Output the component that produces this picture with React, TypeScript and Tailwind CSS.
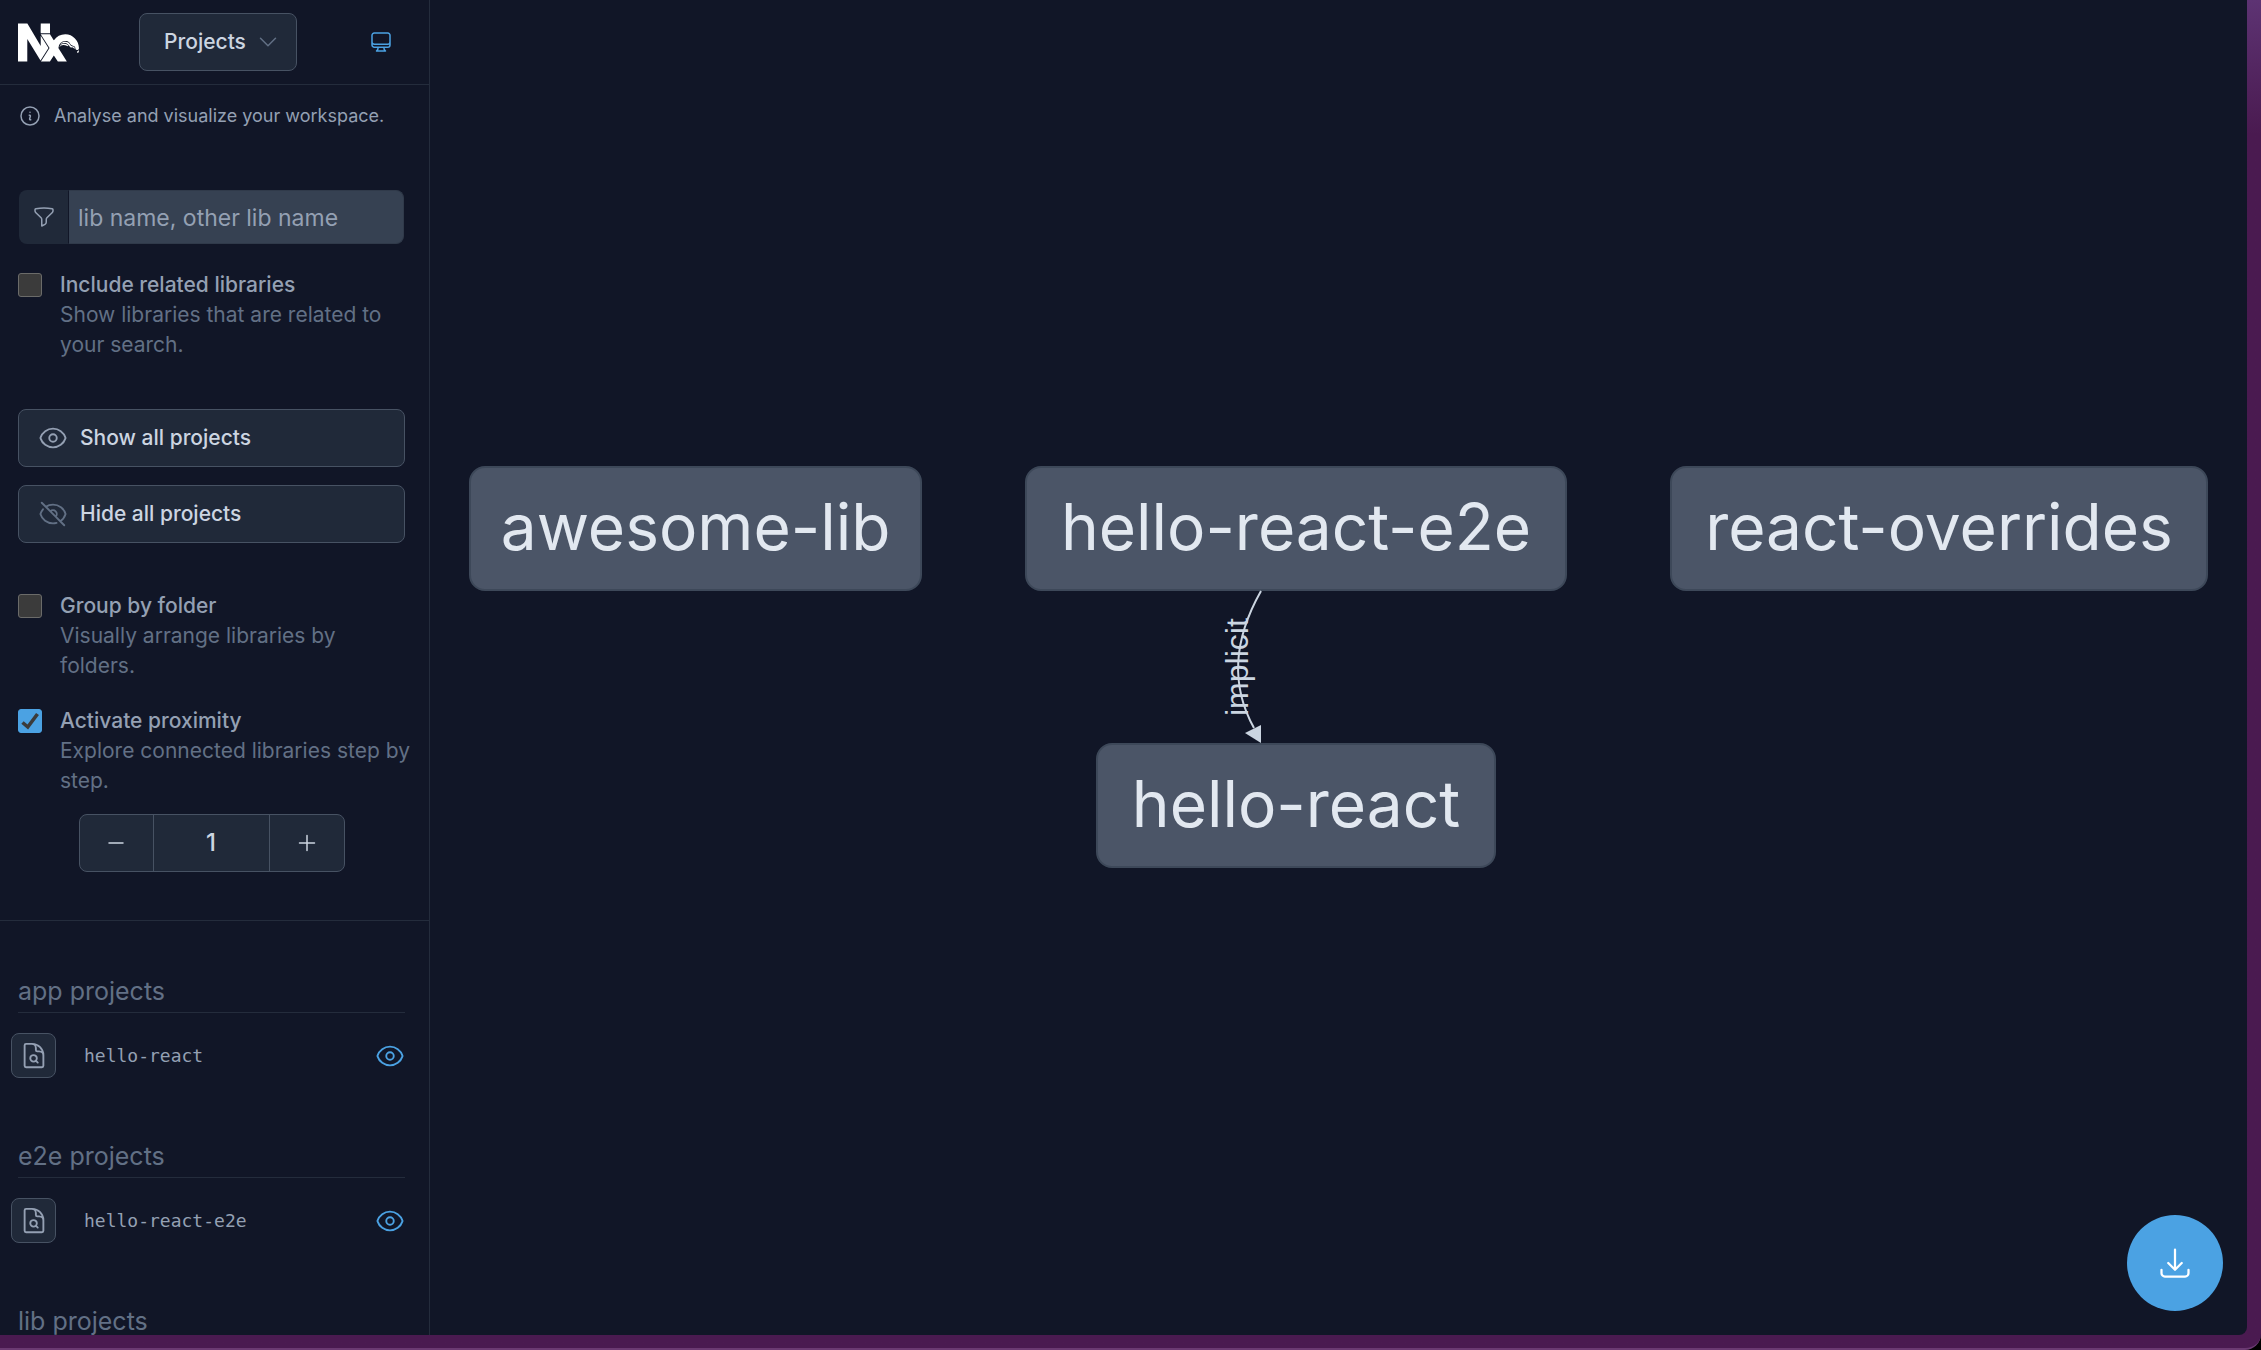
import React, { useState } from 'react';
import {
  HiOutlineArrowDownTray,
  HiOutlineChevronDown,
  HiOutlineComputerDesktop,
  HiOutlineDocumentMagnifyingGlass,
  HiOutlineEye,
  HiOutlineEyeSlash,
  HiOutlineFunnel,
  HiOutlineInformationCircle,
  HiOutlineMinus,
  HiOutlinePlus,
} from 'react-icons/hi2';
import { SiNx } from 'react-icons/si';

const projectGroups = [
  { title: 'app projects', projects: ['hello-react'] },
  { title: 'e2e projects', projects: ['hello-react-e2e'] },
  { title: 'lib projects', projects: ['awesome-lib', 'react-overrides'] },
];

function CheckboxPanel({
  id,
  label,
  description,
  checked,
  onChange,
}: {
  id: string;
  label: string;
  description: string;
  checked: boolean;
  onChange: (checked: boolean) => void;
}) {
  return (
    <div className="-mr-2 flex items-start gap-[18px]">
      <div className="relative mt-[3px] size-6 shrink-0">
        <input
          id={id}
          type="checkbox"
          checked={checked}
          onChange={(e) => onChange(e.target.checked)}
          className="block size-6 appearance-none rounded-[3px] border border-[#6b6b69] bg-[#3b3b3b] checked:border-[#4ba2e3] checked:bg-[#4ba2e3]"
        />
        {checked && (
          <svg viewBox="0 0 24 24" className="pointer-events-none absolute inset-0" fill="none">
            <path d="M4.5 13.5 9.8 18 19.5 5" stroke="#3b3b3b" strokeWidth="3.6" />
          </svg>
        )}
      </div>
      <div className="text-[21px] leading-[30px]">
        <label htmlFor={id} className="block font-medium text-[#94a0b3]">
          {label}
        </label>
        <p className="text-[#627085]">{description}</p>
      </div>
    </div>
  );
}

function PanelButton({
  icon,
  children,
  onClick,
}: {
  icon: React.ReactNode;
  children: React.ReactNode;
  onClick?: () => void;
}) {
  return (
    <button
      type="button"
      onClick={onClick}
      className="flex h-[58px] w-full items-center gap-3 rounded-lg border border-[#475263] bg-[#202939] px-[19px] text-[21px] font-medium text-[#ccd5e1]"
    >
      {icon}
      {children}
    </button>
  );
}

function ProjectList({ title, projects }: { title: string; projects: string[] }) {
  return (
    <section>
      <h2 className="border-b border-[#242c3c] pb-[3px] text-[25px] leading-9 text-[#627085]">
        {title}
      </h2>
      <ul className="-ml-[7px] mt-5 space-y-5">
        {projects.map((project) => (
          <li key={project} className="flex items-center">
            <button
              type="button"
              aria-label={`Focus on ${project}`}
              className="flex size-[45px] items-center justify-center rounded-lg border border-[#475263] bg-[#202939] text-[#94a0b3]"
            >
              <HiOutlineDocumentMagnifyingGlass className="size-[30px]" />
            </button>
            <span className="ml-7 flex-1 font-['DejaVu_Sans_Mono',monospace] text-[18px] text-[#94a0b3]">
              {project}
            </span>
            <button type="button" aria-label={`Toggle ${project}`} className="text-[#4ba2e3]">
              <HiOutlineEye className="size-[30px]" />
            </button>
          </li>
        ))}
      </ul>
    </section>
  );
}

function GraphNode({ className, children }: { className: string; children: React.ReactNode }) {
  return (
    <div
      className={`absolute flex h-[125px] items-center justify-center rounded-2xl border-2 border-[#3d4859] bg-[#4b5567] pb-1 text-[64px] leading-none text-[#e2e8f0] ${className}`}
    >
      {children}
    </div>
  );
}

export default function App() {
  const [search, setSearch] = useState('');
  const [includeRelated, setIncludeRelated] = useState(false);
  const [groupByFolder, setGroupByFolder] = useState(false);
  const [proximity, setProximity] = useState(true);
  const [depth, setDepth] = useState(1);

  return (
    <div className="h-screen overflow-hidden bg-black font-['Inter',sans-serif]">
      <div className="h-full rounded-br-2xl border-b-2 border-[#6b3a72] bg-linear-to-b from-[#5d3373] via-[#4a1a50] via-10% to-[#4a1a50] pr-[14px] pb-[13px]">
        <div className="flex h-full overflow-hidden rounded-br-lg bg-[#111627]">
          <aside className="flex w-[430px] shrink-0 flex-col overflow-hidden border-r border-[#242c3c]">
            <header className="flex h-[85px] shrink-0 items-center justify-between border-b border-[#242c3c] pr-6 pl-[18px]">
              <SiNx className="size-[61px] text-white" title="Nx" />
              <button
                type="button"
                className="flex h-[58px] w-[158px] items-center justify-between rounded-lg border border-[#475263] bg-[#202939] pr-4 pl-6 text-[21px] font-medium text-[#ccd5e1]"
              >
                Projects
                <HiOutlineChevronDown className="size-6 text-[#627085]" />
              </button>
              <button type="button" aria-label="Theme" className="p-3 text-[#4ba2e3]">
                <HiOutlineComputerDesktop className="size-6" />
              </button>
            </header>

            <div className="border-b border-[#242c3c] pr-6 pb-12 pl-[18px]">
              <p className="mt-[17px] flex items-center gap-3 text-[18px] leading-7 text-[#94a0b3]">
                <HiOutlineInformationCircle className="size-6" />
                Analyse and visualize your workspace.
              </p>

              <form className="mx-px mt-15 flex h-[54px]" onSubmit={(e) => e.preventDefault()}>
                <label
                  htmlFor="search"
                  aria-label="Filter"
                  className="flex w-[49px] shrink-0 items-center justify-center rounded-l-lg bg-[#202939] text-[#94a0b3]"
                >
                  <HiOutlineFunnel className="size-6" />
                </label>
                <input
                  id="search"
                  type="text"
                  value={search}
                  onChange={(e) => setSearch(e.target.value)}
                  placeholder="lib name, other lib name"
                  className="min-w-0 flex-1 rounded-r-lg border border-[#303a4a] border-l-[#111627] bg-[#364152] px-[9px] pt-[2px] text-[23px] text-[#ccd5e1] placeholder:text-[#94a0b3]"
                />
              </form>

              <div className="mt-[26px]">
                <CheckboxPanel
                  id="include-related"
                  label="Include related libraries"
                  description="Show libraries that are related to your search."
                  checked={includeRelated}
                  onChange={setIncludeRelated}
                />
              </div>

              <div className="mt-[49px] space-y-[18px]">
                <PanelButton icon={<HiOutlineEye className="size-[30px] text-[#94a0b3]" />}>
                  Show all projects
                </PanelButton>
                <PanelButton icon={<HiOutlineEyeSlash className="size-[30px] text-[#627085]" />}>
                  Hide all projects
                </PanelButton>
              </div>

              <div className="mt-12 space-y-[25px]">
                <CheckboxPanel
                  id="group-by-folder"
                  label="Group by folder"
                  description="Visually arrange libraries by folders."
                  checked={groupByFolder}
                  onChange={setGroupByFolder}
                />
                <CheckboxPanel
                  id="proximity"
                  label="Activate proximity"
                  description="Explore connected libraries step by step."
                  checked={proximity}
                  onChange={setProximity}
                />
              </div>

              <div className="mx-auto mt-[18px] flex h-[58px] w-[266px] divide-x divide-[#475263] overflow-hidden rounded-lg border border-[#475263] bg-[#202939] text-[#ccd5e1]">
                <button
                  type="button"
                  aria-label="Decrement"
                  onClick={() => setDepth(Math.max(1, depth - 1))}
                  className="flex w-[74px] items-center justify-center"
                >
                  <HiOutlineMinus className="size-6" />
                </button>
                <span className="flex flex-1 items-center justify-center text-[24px] font-medium">
                  {depth}
                </span>
                <button
                  type="button"
                  aria-label="Increment"
                  onClick={() => setDepth(depth + 1)}
                  className="flex w-[74px] items-center justify-center"
                >
                  <HiOutlinePlus className="size-6" />
                </button>
              </div>
            </div>

            <div className="mt-[52px] space-y-15 pr-6 pl-[18px]">
              {projectGroups.map((group) => (
                <ProjectList key={group.title} {...group} />
              ))}
            </div>
          </aside>

          <main className="relative flex-1 overflow-hidden">
            <GraphNode className="top-[466px] left-[39px] w-[453px]">awesome-lib</GraphNode>
            <GraphNode className="top-[466px] left-[595px] w-[542px]">hello-react-e2e</GraphNode>
            <GraphNode className="top-[466px] left-[1240px] w-[538px]">react-overrides</GraphNode>
            <GraphNode className="top-[743px] left-[666px] w-[400px]">hello-react</GraphNode>

            <svg
              viewBox="0 0 80 152"
              className="absolute top-[591px] left-[771px] h-[152px] w-20 overflow-visible"
            >
              <path d="M60 0Q18 74 53 137" fill="none" stroke="#cbd5e1" strokeWidth="2" />
              <path d="M60 152V134L44 142Z" fill="#cbd5e1" />
              <text
                transform="translate(47 125) rotate(-90)"
                fill="#cbd5e1"
                className="font-['Liberation_Sans',sans-serif] text-[32px]"
              >
                implicit
              </text>
            </svg>

            <button
              type="button"
              aria-label="Download graph"
              className="absolute right-6 bottom-6 flex size-24 items-center justify-center rounded-full bg-[#4ba2e3] text-white"
            >
              <HiOutlineArrowDownTray className="size-9" />
            </button>
          </main>
        </div>
      </div>
    </div>
  );
}
